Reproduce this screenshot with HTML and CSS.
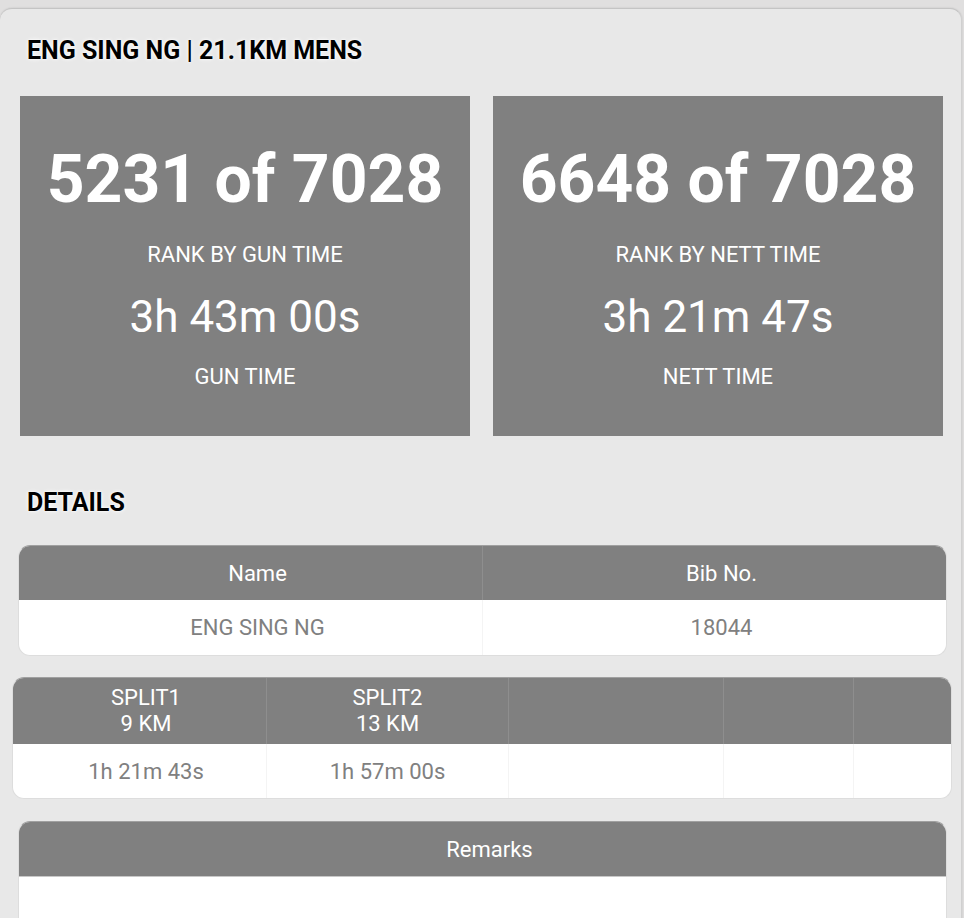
FILE: index.html
```html
<!DOCTYPE html>
<html>
<head>
    <meta charset="utf-8"/>
    <title>Result</title>
    <link rel="stylesheet" href="styles.css">
</head>
<body>

<div class="card">
    <h2 class="title">ENG SING NG | 21.1KM MENS</h2>

    <div class="ranks">
        <div class="rank-box">
            <div class="rank-num">5231 of 7028</div>
            <div class="rank-label">RANK BY GUN TIME</div>
            <div class="rank-time">3h 43m 00s</div>
            <div class="rank-label">GUN TIME</div>
        </div>
        <div class="rank-box">
            <div class="rank-num">6648 of 7028</div>
            <div class="rank-label">RANK BY NETT TIME</div>
            <div class="rank-time">3h 21m 47s</div>
            <div class="rank-label">NETT TIME</div>
        </div>
    </div>

    <h2 class="title details">DETAILS</h2>

    <div class="tbl tbl-info">
        <table>
            <tr><th>Name</th><th>Bib No.</th></tr>
            <tr><td>ENG SING NG</td><td>18044</td></tr>
        </table>
    </div>

    <div class="tbl tbl-split">
        <table>
            <tr>
                <th class="c1">SPLIT1<br/>9 KM</th>
                <th class="c2">SPLIT2<br/>13 KM</th>
                <th class="c3"></th>
                <th class="c4"></th>
                <th class="c5"></th>
            </tr>
            <tr>
                <td class="c1">1h 21m 43s</td>
                <td class="c2">1h 57m 00s</td>
                <td class="c3"></td>
                <td class="c4"></td>
                <td class="c5"></td>
            </tr>
        </table>
    </div>

    <div class="tbl tbl-remarks">
        <table>
            <tr><th>Remarks</th></tr>
            <tr><td></td></tr>
        </table>
    </div>
</div>

</body>
</html>
```

FILE: styles.css
```css
body {
    margin: 0;
    background: #e0dfdf;
    font-family: Roboto, "Liberation Sans", sans-serif;
    overflow: hidden;
}

.card {
    margin: 8px 2px 0 0;
    padding: 27px 18px 0 20px;
    height: 1000px;
    background: #e8e8e8;
    border-top: 1px solid #c4c4c4;
    border-right: 1px solid #d0d0d0;
    border-radius: 12px 12px 0 0;
    box-shadow: 0 0 2px rgba(0, 0, 0, 0.15);
}

.title {
    margin: 0 0 30px 7px;
    font-size: 25px;
    line-height: 30px;
    font-weight: bold;
    color: #000;
    text-shadow: 0 0 2px #fff, 0 0 4px #fff;
}

.ranks {
    display: grid;
    grid-template-columns: 1fr 1fr;
    gap: 23px;
}

.rank-box {
    background: #808080;
    color: #fff;
    text-align: center;
    padding: 44px 0 44px;
}

.rank-num {
    font-size: 66px;
    font-weight: bold;
    line-height: 80px;
    margin-bottom: 20px;
}

.rank-label {
    font-size: 22px;
    line-height: 30px;
}

.rank-time {
    font-size: 44px;
    line-height: 56px;
    margin: 19px 0 17px;
}

.details {
    margin-top: 52px;
    margin-bottom: 27px;
}

.tbl {
    background: #fff;
    border-radius: 12px;
    overflow: hidden;
    border: 1px solid #ddd;
    border-top-color: #a0a0a0;
}

.tbl table {
    width: 100%;
    border-collapse: collapse;
    table-layout: fixed;
}

.tbl th {
    background: #808080;
    color: #fff;
    font-weight: normal;
    font-size: 22px;
    height: 54px;
    padding: 0 0 0 14px;
    border-left: 1px solid #8e8e8e;
}

.tbl td {
    color: #808080;
    font-size: 22px;
    height: 55px;
    text-align: center;
    padding: 0 0 0 14px;
    border-left: 1px solid #f4f4f4;
}

.tbl th:first-child,
.tbl td:first-child {
    border-left: none;
}

.tbl-info {
    margin: 0 -4px 21px -2px;
}

.tbl-split {
    margin: 0 -9px 22px -8px;
}

.tbl-split th {
    height: 66px;
    line-height: 26px;
    padding: 0;
}

.tbl-split td {
    height: 54px;
    padding: 0;
}

.tbl-split .c1 { width: 240px; padding-left: 13px; }
.tbl-split .c2 { width: 241px; }
.tbl-split .c3 { width: 214px; }
.tbl-split .c4 { width: 129px; }

.tbl-remarks {
    margin: 0 -4px 0 -2px;
    border-radius: 12px 12px 0 0;
}

.tbl-remarks th {
    border-bottom: 1px solid #c8c8c8;
}

.tbl-remarks td {
    height: 120px;
}
```
